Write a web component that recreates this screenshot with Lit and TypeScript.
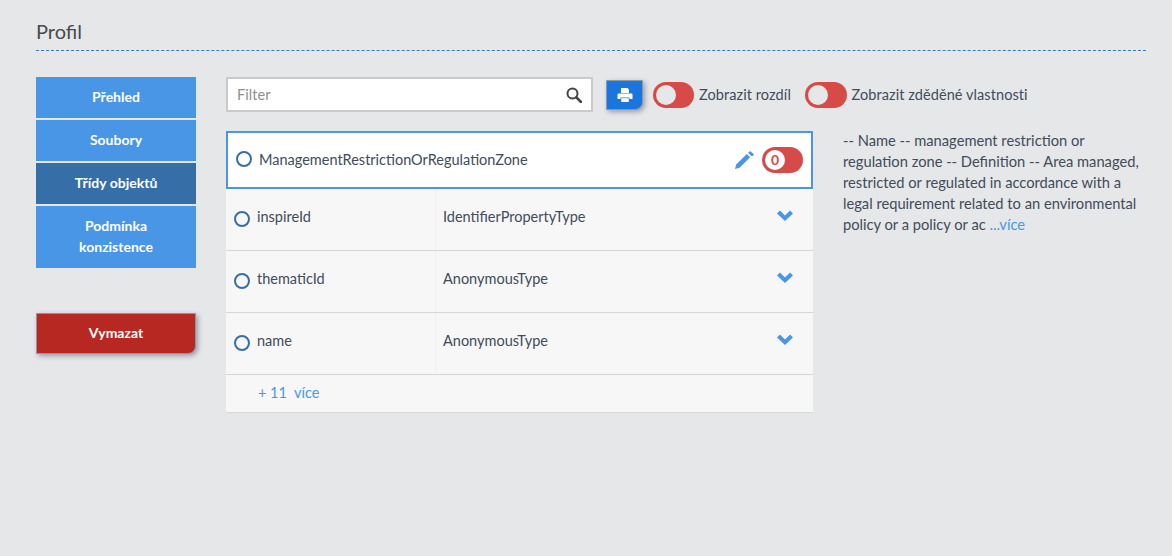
import { LitElement, html, css } from 'lit';
import { customElement } from 'lit/decorators.js';

const chevron = html`<svg class="chev" viewBox="0 0 16 11" width="16" height="11"><path d="M0 3.4 2.9.5 8 5.4 13.1.5 16 3.4 8 11z" fill="#4a96e6"></path></svg>`;

@customElement('app-root')
export class AppRoot extends LitElement {
  static styles = css`
    :host {
      display: block;
      height: 556px;
      background: #e6e7e9;
      font-family: 'Lato', 'Noto Sans', sans-serif;
      font-size: 14.5px;
      color: #3f4c5a;
      overflow: hidden;
    }
    .page {
      padding: 19px 26px 0 36px;
    }
    h1 {
      margin: 0;
      height: 31px;
      font-size: 20px;
      font-weight: 400;
      line-height: 24px;
      color: #4a4a4a;
      border-bottom: 1px dashed #3a7ac0;
    }
    .body {
      display: flex;
      margin-top: 26px;
    }
    .side {
      width: 160px;
      flex: none;
      margin-right: 30px;
      display: flex;
      flex-direction: column;
      gap: 2px;
    }
    .nav {
      background: #4a96e6;
      color: #fff;
      font-size: 14px;
      font-weight: 700;
      text-align: center;
      padding: 9px 20px 11px;
      line-height: 21px;
    }
    .nav.active {
      background: #366ea8;
    }
    .delete {
      margin-top: 43px;
      height: 41px;
      box-sizing: border-box;
      background: #b82823;
      color: #fff;
      font-size: 14px;
      font-weight: 700;
      text-align: center;
      line-height: 37px;
      border: 1px solid #8f96a0;
      border-radius: 0 0 8px 0;
      box-shadow: 2px 2px 5px rgba(60, 70, 90, 0.45);
    }
    .main {
      flex: 1;
      min-width: 0;
    }
    .tools {
      display: flex;
      align-items: center;
      height: 35px;
    }
    .tools span {
      letter-spacing: 0.08px;
    }
    .filter {
      width: 367px;
      height: 35px;
      box-sizing: border-box;
      background: #fff;
      border: 2px solid #c9cacb;
      display: flex;
      align-items: center;
      justify-content: space-between;
      padding: 0 9px;
      color: #8f8f8f;
    }
    .print {
      width: 37px;
      height: 30px;
      margin-left: 13px;
      box-sizing: border-box;
      background: #1a76dc;
      border: 1px solid #8a99aa;
      border-radius: 0 0 8px 0;
      box-shadow: 2px 2px 5px rgba(60, 70, 90, 0.45);
      display: flex;
      align-items: center;
      justify-content: center;
    }
    .switch {
      width: 41.5px;
      height: 26px;
      box-sizing: border-box;
      border-radius: 13px;
      background: #d64a48;
      position: relative;
      flex: none;
    }
    .switch::before {
      content: '';
      position: absolute;
      left: 3px;
      top: 3px;
      width: 20px;
      height: 20px;
      border-radius: 50%;
      background: #e6e7e9;
    }
    .tools .switch {
      margin-left: 9.5px;
    }
    .tools .switch + span {
      margin-left: 5px;
    }
    .tools span + .switch {
      margin-left: 14px;
    }
    .content {
      display: flex;
      margin-top: 19px;
    }
    .table {
      width: 587px;
      flex: none;
    }
    .head {
      height: 58px;
      box-sizing: border-box;
      background: #fff;
      border: 2px solid #4a96e6;
      display: flex;
      align-items: center;
      padding: 0 8px 2px 8px;
    }
    .radio {
      width: 16px;
      height: 16px;
      box-sizing: border-box;
      border: 2px solid #366ea8;
      border-radius: 50%;
      flex: none;
    }
    .head .name {
      margin-left: 7px;
      flex: 1;
    }
    .head svg {
      margin-top: 2px;
    }
    .head .switch {
      width: 41px;
      margin: 2px 0 0 8px;
    }
    .head .switch::before {
      background: #fff;
    }
    .count {
      position: absolute;
      left: 3px;
      top: 3px;
      width: 20px;
      line-height: 20px;
      text-align: center;
      font-weight: 700;
      font-size: 14px;
      color: #d64a48;
    }
    .row {
      height: 62px;
      box-sizing: border-box;
      background: #f7f7f8;
      border-bottom: 1px solid #d5d6d8;
      display: flex;
      padding-left: 8px;
    }
    .row .radio {
      margin-top: 22px;
    }
    .row .prop {
      width: 179px;
      margin-left: 7px;
      padding-top: 18px;
      line-height: 20px;
      border-right: 1px solid #f0f0f1;
      box-sizing: border-box;
    }
    .row .type {
      flex: 1;
      padding: 18px 0 0 7px;
      line-height: 20px;
    }
    .chev {
      margin: 21px 20px 0 0;
    }
    .more {
      height: 38px;
      box-sizing: border-box;
      background: #f7f7f8;
      border-bottom: 1px solid #d5d6d8;
      padding-left: 32px;
      line-height: 36px;
      color: #4a96e6;
      white-space: pre;
    }
    .desc {
      margin: -1px 0 0 30px;
      width: 304px;
      font-size: 14.7px;
      line-height: 21px;
      white-space: nowrap;
    }
    a {
      color: #4a96e6;
    }
  `;

  render() {
    const rows = [
      ['inspireId', 'IdentifierPropertyType'],
      ['thematicId', 'AnonymousType'],
      ['name', 'AnonymousType'],
    ];
    return html`
      <div class="page">
        <h1>Profil</h1>
        <div class="body">
          <div class="side">
            <div class="nav">Přehled</div>
            <div class="nav">Soubory</div>
            <div class="nav active">Třídy objektů</div>
            <div class="nav">Podmínka konzistence</div>
            <div class="delete">Vymazat</div>
          </div>
          <div class="main">
            <div class="tools">
              <div class="filter">
                <span>Filter</span>
                <svg width="16" height="16" viewBox="0 0 16 16">
                  <circle cx="6.5" cy="6.5" r="5" fill="none" stroke="#444" stroke-width="2"></circle>
                  <path d="M10.4 10.4 15 15" stroke="#444" stroke-width="2.6" stroke-linecap="round"></path>
                </svg>
              </div>
              <div class="print">
                <svg width="16" height="16" viewBox="0 0 16 16" fill="#fff">
                  <path d="M4 1h6.5L12 2.5V6H4z"></path>
                  <path d="M1.5 6.6h13a1 1 0 0 1 1 1V12h-3v-1.6h-9V12h-3V7.6a1 1 0 0 1 1-1z"></path>
                  <path d="M4.2 11.2h7.6V15H4.2z"></path>
                </svg>
              </div>
              <div class="switch"></div>
              <span>Zobrazit rozdíl</span>
              <div class="switch"></div>
              <span>Zobrazit zděděné vlastnosti</span>
            </div>
            <div class="content">
              <div class="table">
                <div class="head">
                  <div class="radio"></div>
                  <div class="name">ManagementRestrictionOrRegulationZone</div>
                  <svg width="19" height="18" viewBox="0 0 19 18" fill="#4a96e6">
                    <path d="M0 18l1.2-4.6L11.8 3l3.4 3.2L4.6 16.8z"></path>
                    <path d="M13 1.8 14.4.5a1 1 0 0 1 1.4 0l2.7 2.5a1 1 0 0 1 0 1.4L16.6 5.2z"></path>
                  </svg>
                  <div class="switch"><span class="count">0</span></div>
                </div>
                ${rows.map(
                  ([prop, type]) => html`
                    <div class="row">
                      <div class="radio"></div>
                      <div class="prop">${prop}</div>
                      <div class="type">${type}</div>
                      ${chevron}
                    </div>
                  `
                )}
                <div class="more">+ 11  více</div>
              </div>
              <p class="desc">
                -- Name -- management restriction or<br />
                regulation zone -- Definition -- Area managed,<br />
                restricted or regulated in accordance with a<br />
                legal requirement related to an environmental<br />
                policy or a policy or ac <a>...více</a>
              </p>
            </div>
          </div>
        </div>
      </div>
    `;
  }
}
